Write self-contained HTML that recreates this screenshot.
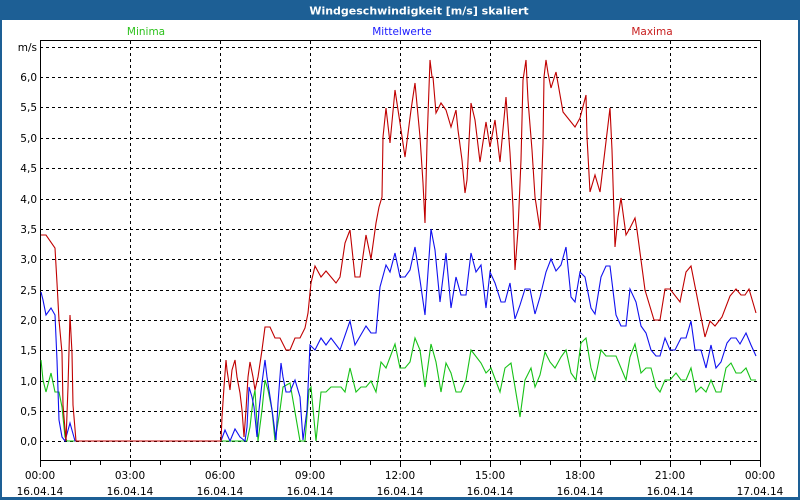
<!DOCTYPE html>
<html><head><meta charset="utf-8"><style>
html,body{margin:0;padding:0;background:#fff;}
svg{display:block;}
text{font-family:"DejaVu Sans","Liberation Sans",sans-serif;font-size:10.5px;}
</style></head><body>
<svg width="800" height="500" viewBox="0 0 800 500" xmlns="http://www.w3.org/2000/svg">
<rect x="0" y="0" width="800" height="500" fill="#1d5f95"/>
<rect x="2" y="20" width="796" height="477" fill="#fff"/>
<text x="419" y="14.5" fill="#fff" text-anchor="middle" font-weight="bold" style="font-size:11px">Windgeschwindigkeit [m/s] skaliert</text>
<text x="146" y="35" fill="#2ec21e" text-anchor="middle">Minima</text>
<text x="402" y="35" fill="#1a1aff" text-anchor="middle">Mittelwerte</text>
<text x="652" y="35" fill="#c81e1e" text-anchor="middle">Maxima</text>
<g stroke="#000" stroke-width="1" stroke-dasharray="3,3" fill="none">
<path d="M40 47.5H760M40 77.5H760M40 107.5H760M40 138.5H760M40 168.5H760M40 199.5H760M40 229.5H760M40 259.5H760M40 290.5H760M40 320.5H760M40 350.5H760M40 381.5H760M40 411.5H760M40 441.5H760"/>
<path d="M130.5 41V460M220.5 41V460M310.5 41V460M400.5 41V460M490.5 41V460M580.5 41V460M670.5 41V460"/>
</g>
<rect x="40.5" y="40.5" width="720" height="420" fill="none" stroke="#000"/>
<g stroke="#000"><path d="M70.5 461v4M100.5 461v4M130.5 461v6M160.5 461v4M190.5 461v4M220.5 461v6M250.5 461v4M280.5 461v4M310.5 461v6M340.5 461v4M370.5 461v4M400.5 461v6M430.5 461v4M460.5 461v4M490.5 461v6M520.5 461v4M550.5 461v4M580.5 461v6M610.5 461v4M640.5 461v4M670.5 461v6M700.5 461v4M730.5 461v4M40.5 461v6M760.5 461v6"/></g>
<g fill="#000" text-anchor="end">
<text x="37" y="51">m/s</text><text x="37" y="81">6,0</text><text x="37" y="111">5,5</text><text x="37" y="142">5,0</text><text x="37" y="172">4,5</text><text x="37" y="203">4,0</text><text x="37" y="233">3,5</text><text x="37" y="263">3,0</text><text x="37" y="294">2,5</text><text x="37" y="324">2,0</text><text x="37" y="354">1,5</text><text x="37" y="385">1,0</text><text x="37" y="415">0,5</text><text x="37" y="445">0,0</text>
</g>
<g fill="#000" text-anchor="middle">
<text x="40" y="479">00:00</text><text x="40" y="495">16.04.14</text>
<text x="130" y="479">03:00</text><text x="130" y="495">16.04.14</text>
<text x="220" y="479">06:00</text><text x="220" y="495">16.04.14</text>
<text x="310" y="479">09:00</text><text x="310" y="495">16.04.14</text>
<text x="400" y="479">12:00</text><text x="400" y="495">16.04.14</text>
<text x="490" y="479">15:00</text><text x="490" y="495">16.04.14</text>
<text x="580" y="479">18:00</text><text x="580" y="495">16.04.14</text>
<text x="670" y="479">21:00</text><text x="670" y="495">16.04.14</text>
<text x="760" y="479">00:00</text><text x="760" y="495">17.04.14</text>
</g>
<g fill="none" stroke-width="1.1">
<polyline stroke="#17c217" points="41,360 43,380 46,392 51,373 55,392 59,392 62,407 65,437 67,441 221,441 247,441 250,427 253,400 255,390 258,441 262,410 265,380 268,390 272,410 275,441 280,410 283,387 290,383 295,412 300,441 305,441 309,390 311,387 316,441 321,392 326,392 331,387 341,387 345,392 350,368 356,392 361,387 366,387 371,381 376,392 381,362 386,368 395,344 400,368 405,368 410,362 415,338 420,350 425,387 431,344 436,362 441,392 446,363 451,373 456,392 461,392 466,380 471,350 481,363 486,373 491,368 500,392 505,368 511,363 520,417 525,380 531,368 535,387 540,375 545,352 550,362 555,368 561,357 566,350 571,373 576,380 581,343 586,338 591,368 595,380 601,350 606,356 616,356 626,380 630,357 635,344 641,373 646,368 651,368 656,387 660,392 665,380 670,380 676,373 681,380 686,380 691,368 696,392 701,387 706,392 711,380 716,392 721,392 726,368 731,363 736,373 741,373 746,368 751,380 756,380"/>
<polyline stroke="#1010f0" points="41,292 43,300 46,315 51,308 55,315 57,360 59,420 62,437 65,441 70,423 75,441 221,441 225,430 230,441 235,429 240,437 245,441 247,427 249,387 252,397 254,407 257,437 259,410 262,383 265,360 267,377 271,403 273,417 276,440 278,403 281,363 283,377 286,392 290,392 295,380 300,397 303,440 307,410 310,345 315,350 321,338 326,345 331,338 340,350 350,321 355,345 366,326 371,333 376,333 380,287 386,265 390,272 395,253 400,277 405,277 410,270 415,247 420,280 425,315 431,229 435,250 440,302 446,253 451,308 456,277 461,295 466,295 471,253 476,272 481,265 486,308 490,272 495,283 501,302 505,302 510,283 515,319 520,305 525,289 530,289 535,314 540,297 546,272 551,259 556,271 561,265 566,247 571,297 575,302 580,272 585,277 591,308 595,314 601,277 606,266 610,266 616,315 621,326 626,326 630,289 636,302 641,326 646,333 651,350 656,356 660,356 665,338 670,350 675,350 681,338 686,338 691,321 695,350 701,350 706,368 711,345 716,368 721,362 727,343 731,338 736,338 740,344 746,333 751,345 756,356"/>
<polyline stroke="#c00000" points="41,235 46,235 55,248 57,283 59,320 62,353 63,405 66,441 68,387 70,315 72,353 73,405 76,441 221,441 222,417 224,387 226,360 227,370 230,390 232,370 235,360 237,377 240,393 242,410 244,437 246,410 248,377 250,362 253,377 255,390 258,377 262,350 265,327 270,327 275,338 280,338 286,350 290,350 295,338 300,338 305,328 308,313 311,283 315,266 321,277 326,271 336,283 340,277 345,243 350,230 355,277 360,277 366,235 371,259 376,223 379,207 382,197 383,137 386,108 390,143 395,90 400,123 405,157 411,110 415,83 420,137 423,183 425,223 427,143 430,60 432,77 433,77 436,113 441,103 446,110 451,127 456,110 458,130 462,160 465,193 467,180 471,103 475,120 480,162 486,122 490,147 495,120 500,162 506,97 510,153 513,207 515,270 518,230 521,160 523,80 526,60 528,100 532,150 535,197 540,230 543,143 544,77 546,60 548,73 551,88 556,72 563,112 575,127 580,118 586,95 587,137 590,192 595,175 600,192 605,150 610,108 612,150 615,247 618,217 621,198 626,235 630,228 635,218 637,230 645,290 654,320 660,320 665,289 670,289 680,302 686,272 691,266 705,337 710,321 715,326 722,317 730,296 736,289 741,295 745,295 749,289 756,313"/>
</g>
</svg>
</body></html>
